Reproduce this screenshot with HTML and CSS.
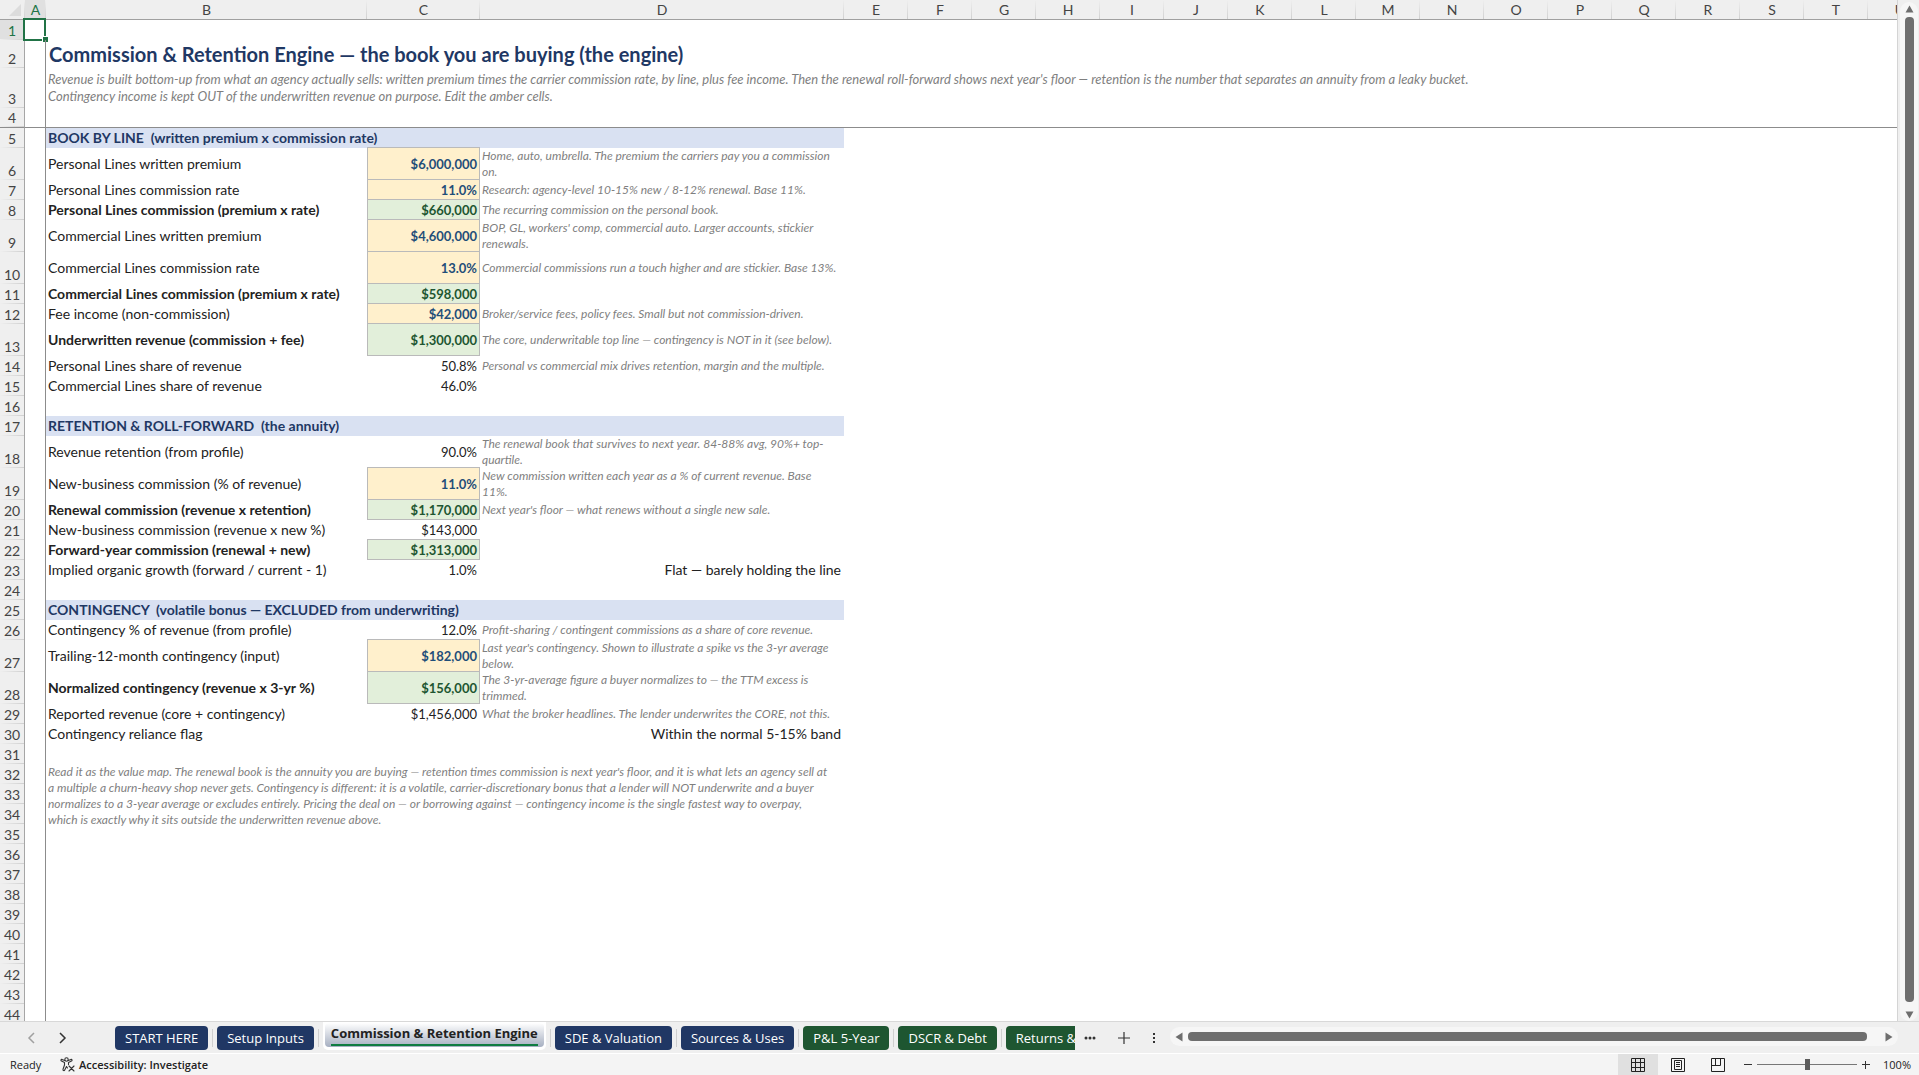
FILE: index.html
```html
<!DOCTYPE html>
<html lang="en">
<head>
<meta charset="utf-8">
<title>Commission &amp; Retention Engine</title>
<link rel="stylesheet" href="styles.css">
</head>
<body>
<main class="workspace">
  <div class="sheet">
    <table class="grid">
      <colgroup>
        <col class="w-head"><col class="w-a"><col class="w-b"><col class="w-c"><col class="w-d">
        <col span="17" class="w-std">
      </colgroup>
      <thead>
        <tr><th class="corner"><svg width="12" height="12" viewBox="0 0 12 12"><path d="M12 0v12H0z" fill="#dcdcdc"/></svg></th><th class="active">A</th><th>B</th><th>C</th><th>D</th><th>E</th><th>F</th><th>G</th><th>H</th><th>I</th><th>J</th><th>K</th><th>L</th><th>M</th><th>N</th><th>O</th><th>P</th><th>Q</th><th>R</th><th>S</th><th>T</th><th>U</th></tr>
      </thead>
      <tbody>
        <tr><th class="active">1</th><td class="a selected"></td></tr>
        <tr class="title-row"><th>2</th><td class="a"></td><td class="title" colspan="14">Commission &amp; Retention Engine — the book you are buying (the engine)</td></tr>
        <tr class="intro-row"><th>3</th><td class="a"></td><td class="intro" colspan="14">Revenue is built bottom-up from what an agency actually sells: written premium times the carrier commission rate, by line, plus fee income. Then the renewal roll-forward shows next year's floor — retention is the number that separates an annuity from a leaky bucket.<br>Contingency income is kept OUT of the underwritten revenue on purpose. Edit the amber cells.</td></tr>
        <tr class="frozen"><th>4</th><td class="a"></td><td colspan="20"></td></tr>
        <tr><th>5</th><td class="a"></td><td class="band" colspan="3">BOOK BY LINE&nbsp; (written premium x commission rate)</td></tr>
        <tr class="tall"><th>6</th><td class="a"></td><td>Personal Lines written premium</td><td class="num input">$6,000,000</td><td class="note">Home, auto, umbrella. The premium the carriers pay you a commission on.</td></tr>
        <tr><th>7</th><td class="a"></td><td>Personal Lines commission rate</td><td class="num input">11.0%</td><td class="note">Research: agency-level 10-15% new / 8-12% renewal. Base 11%.</td></tr>
        <tr><th>8</th><td class="a"></td><td class="strong">Personal Lines commission (premium x rate)</td><td class="num result">$660,000</td><td class="note">The recurring commission on the personal book.</td></tr>
        <tr class="tall"><th>9</th><td class="a"></td><td>Commercial Lines written premium</td><td class="num input">$4,600,000</td><td class="note">BOP, GL, workers' comp, commercial auto. Larger accounts, stickier renewals.</td></tr>
        <tr class="tall"><th>10</th><td class="a"></td><td>Commercial Lines commission rate</td><td class="num input">13.0%</td><td class="note">Commercial commissions run a touch higher and are stickier. Base 13%.</td></tr>
        <tr><th>11</th><td class="a"></td><td class="strong">Commercial Lines commission (premium x rate)</td><td class="num result">$598,000</td></tr>
        <tr><th>12</th><td class="a"></td><td>Fee income (non-commission)</td><td class="num input">$42,000</td><td class="note">Broker/service fees, policy fees. Small but not commission-driven.</td></tr>
        <tr class="tall"><th>13</th><td class="a"></td><td class="strong">Underwritten revenue (commission + fee)</td><td class="num result">$1,300,000</td><td class="note">The core, underwritable top line — contingency is NOT in it (see below).</td></tr>
        <tr><th>14</th><td class="a"></td><td>Personal Lines share of revenue</td><td class="num">50.8%</td><td class="note">Personal vs commercial mix drives retention, margin and the multiple.</td></tr>
        <tr><th>15</th><td class="a"></td><td>Commercial Lines share of revenue</td><td class="num">46.0%</td></tr>
        <tr><th>16</th><td class="a"></td></tr>
        <tr><th>17</th><td class="a"></td><td class="band" colspan="3">RETENTION &amp; ROLL-FORWARD&nbsp; (the annuity)</td></tr>
        <tr class="tall"><th>18</th><td class="a"></td><td>Revenue retention (from profile)</td><td class="num">90.0%</td><td class="note">The renewal book that survives to next year. 84-88% avg, 90%+ top-quartile.</td></tr>
        <tr class="tall"><th>19</th><td class="a"></td><td>New-business commission (% of revenue)</td><td class="num input">11.0%</td><td class="note">New commission written each year as a % of current revenue. Base 11%.</td></tr>
        <tr><th>20</th><td class="a"></td><td class="strong">Renewal commission (revenue x retention)</td><td class="num result">$1,170,000</td><td class="note">Next year's floor — what renews without a single new sale.</td></tr>
        <tr><th>21</th><td class="a"></td><td>New-business commission (revenue x new %)</td><td class="num">$143,000</td></tr>
        <tr><th>22</th><td class="a"></td><td class="strong">Forward-year commission (renewal + new)</td><td class="num result">$1,313,000</td></tr>
        <tr><th>23</th><td class="a"></td><td>Implied organic growth (forward / current - 1)</td><td class="num">1.0%</td><td class="flag">Flat — barely holding the line</td></tr>
        <tr><th>24</th><td class="a"></td></tr>
        <tr><th>25</th><td class="a"></td><td class="band" colspan="3">CONTINGENCY&nbsp; (volatile bonus — EXCLUDED from underwriting)</td></tr>
        <tr><th>26</th><td class="a"></td><td>Contingency % of revenue (from profile)</td><td class="num">12.0%</td><td class="note">Profit-sharing / contingent commissions as a share of core revenue.</td></tr>
        <tr class="tall"><th>27</th><td class="a"></td><td>Trailing-12-month contingency (input)</td><td class="num input">$182,000</td><td class="note">Last year's contingency. Shown to illustrate a spike vs the 3-yr average below.</td></tr>
        <tr class="tall"><th>28</th><td class="a"></td><td class="strong">Normalized contingency (revenue x 3-yr %)</td><td class="num result">$156,000</td><td class="note">The 3-yr-average figure a buyer normalizes to — the TTM excess is trimmed.</td></tr>
        <tr><th>29</th><td class="a"></td><td>Reported revenue (core + contingency)</td><td class="num">$1,456,000</td><td class="note">What the broker headlines. The lender underwrites the CORE, not this.</td></tr>
        <tr><th>30</th><td class="a"></td><td>Contingency reliance flag</td><td></td><td class="flag">Within the normal 5-15% band</td></tr>
        <tr><th>31</th><td class="a"></td></tr>
        <tr><th>32</th><td class="a"></td><td class="note closing" colspan="3" rowspan="4">Read it as the value map. The renewal book is the annuity you are buying — retention times commission is next year's floor, and it is what lets an agency sell at a multiple a churn-heavy shop never gets. Contingency is different: it is a volatile, carrier-discretionary bonus that a lender will NOT underwrite and a buyer normalizes to a 3-year average or excludes entirely. Pricing the deal on — or borrowing against — contingency income is the single fastest way to overpay, which is exactly why it sits outside the underwritten revenue above.</td></tr>
        <tr><th>33</th><td class="a"></td></tr>
        <tr><th>34</th><td class="a"></td></tr>
        <tr><th>35</th><td class="a"></td></tr>
        <tr><th>36</th><td class="a"></td></tr>
        <tr><th>37</th><td class="a"></td></tr>
        <tr><th>38</th><td class="a"></td></tr>
        <tr><th>39</th><td class="a"></td></tr>
        <tr><th>40</th><td class="a"></td></tr>
        <tr><th>41</th><td class="a"></td></tr>
        <tr><th>42</th><td class="a"></td></tr>
        <tr><th>43</th><td class="a"></td></tr>
        <tr><th>44</th><td class="a"></td></tr>
      </tbody>
    </table>
  </div>
  <div class="vscroll">
    <svg width="9" height="8" viewBox="0 0 9 8"><path d="M4.500 0.500L8.500 7.500H0.500z" fill="#6e6e6e"/></svg>
    <div class="vthumb"></div>
    <svg width="9" height="8" viewBox="0 0 9 8"><path d="M4.500 7.500L8.500 0.500H0.500z" fill="#6e6e6e"/></svg>
  </div>
</main>

<div class="tabbar">
  <nav class="sheets" aria-label="Sheets">
    <div class="arrows">
      <button type="button" aria-label="Previous sheet"><svg width="8" height="12" viewBox="0 0 8 12" fill="none" stroke="#a0a0a0" stroke-width="1.500"><path d="M7 1L2 6l5 5"/></svg></button>
      <button type="button" aria-label="Next sheet"><svg width="8" height="12" viewBox="0 0 8 12" fill="none" stroke="#333" stroke-width="1.500"><path d="M1 1l5 5-5 5"/></svg></button>
    </div>
    <div class="tabs">
      <button type="button" class="tab blue">START HERE</button>
      <span class="sep"></span>
      <button type="button" class="tab blue">Setup Inputs</button>
      <span class="sep"></span>
      <div class="current"><button type="button" class="tab"><span>Commission &amp; Retention Engine</span></button></div>
      <span class="sep"></span>
      <button type="button" class="tab blue">SDE &amp; Valuation</button>
      <span class="sep"></span>
      <button type="button" class="tab blue">Sources &amp; Uses</button>
      <span class="sep"></span>
      <button type="button" class="tab green">P&amp;L 5-Year</button>
      <span class="sep"></span>
      <button type="button" class="tab green">DSCR &amp; Debt</button>
      <span class="sep"></span>
      <button type="button" class="tab green">Returns &amp;</button>
    </div>
  </nav>
  <div class="tools">
    <button type="button" aria-label="More sheets"><svg width="12" height="4" viewBox="0 0 12 4" fill="#333"><circle cx="2" cy="2" r="1.500"/><circle cx="6" cy="2" r="1.500"/><circle cx="10" cy="2" r="1.500"/></svg></button>
    <button type="button" aria-label="New sheet"><svg width="12" height="12" viewBox="0 0 12 12" stroke="#333"><path d="M6 0v12M0 6h12" stroke-width="1.200"/></svg></button>
    <button type="button" aria-label="Resize tabs"><svg width="4" height="12" viewBox="0 0 4 12" fill="#333"><path d="M1 1h2v2H1zM1 5h2v2H1zM1 9h2v2H1z"/></svg></button>
  </div>
  <div class="hscroll">
    <svg width="8" height="10" viewBox="0 0 8 10"><path d="M7.500 0.500v9L0.500 5z" fill="#6e6e6e"/></svg>
    <div class="hthumb"></div>
    <svg width="8" height="10" viewBox="0 0 8 10"><path d="M0.500 0.500v9L7.500 5z" fill="#6e6e6e"/></svg>
  </div>
</div>

<footer class="status">
  <span class="ready">Ready</span>
  <button type="button" class="access">
    <svg width="15" height="15" viewBox="0 0 15 15" fill="none" stroke="#333" stroke-width="1.100" stroke-linejoin="round" stroke-linecap="round"><circle cx="6.500" cy="2.500" r="1.700"/><path d="M4.800 3.400L2 2.400C0.800 2.200 0.600 3.700 1.500 4.100L4.500 5.400V8L3 12.300c-0.300 1.300 1.200 1.700 1.700 0.700L6.500 9.500l1 1.500M8.200 3.400L11 2.400c1.200-0.200 1.400 1.300 0.500 1.700L8.500 5.400V7.500"/><path d="M9 9l5 5M14 9l-5 5"/></svg>
    Accessibility: Investigate
  </button>
  <div class="views">
    <button type="button" class="view on" aria-label="Normal view"><svg width="14" height="14" viewBox="0 0 14 14" fill="none" stroke="#222"><path d="M.5.5h13v13H.5zM.5 4.500h13M.5 9.500h13M4.500.5v13M9.500.5v13"/></svg></button>
    <button type="button" class="view" aria-label="Page layout"><svg width="14" height="14" viewBox="0 0 14 14" fill="none" stroke="#222"><path d="M.5.5h13v13H.5zM3.500 2.500h7v9h-7zM5 4.500h4M5 6.500h4M5 8.500h4"/></svg></button>
    <button type="button" class="view" aria-label="Page break preview"><svg width="14" height="14" viewBox="0 0 14 14" fill="none" stroke="#222"><path d="M.5.5h13v13H.5zM4.500.5v7M9.500.5v7M.5 7.500h9"/></svg></button>
  </div>
  <div class="zoom">
    <button type="button" aria-label="Zoom out"><svg width="8" height="8" viewBox="0 0 8 8" stroke="#333"><path d="M0 3.500h8"/></svg></button>
    <input type="range" min="0" max="100" value="50" aria-label="Zoom">
    <button type="button" aria-label="Zoom in"><svg width="8" height="8" viewBox="0 0 8 8" stroke="#333"><path d="M0 3.500h8M3.500 0v8"/></svg></button>
    <span class="percent">100%</span>
  </div>
</footer>
</body>
</html>
```
FILE: styles.css
```css
* { box-sizing: border-box; }

body {
  margin: 0;
  height: 100vh;
  display: flex;
  flex-direction: column;
  overflow: hidden;
  background: #efefef;
  color: #222;
  font: 14px/18px Lato, Carlito, sans-serif;
}

button {
  margin: 0;
  padding: 0;
  border: 0;
  background: none;
  color: inherit;
  font: inherit;
}

svg { display: block; }

/* Worksheet */
.workspace { flex: 1; min-height: 0; display: flex; }

.sheet {
  flex: 1;
  min-width: 0;
  overflow: hidden;
  background: #fff;
  border-right: 1px solid #d4d4d4;
}

.grid { table-layout: fixed; width: 1932px; border-spacing: 0; }
.w-head { width: 25px; }
.w-a { width: 21px; }
.w-b { width: 321px; }
.w-c { width: 113px; }
.w-d { width: 364px; }
.w-std { width: 64px; }

.grid tr { height: 20px; }
.grid .title-row { height: 28px; }
.grid .intro-row { height: 40px; }
.grid .tall { height: 32px; }

th, td { padding: 0 3px 0 2px; text-align: left; vertical-align: middle; white-space: nowrap; }

th {
  padding: 0;
  background: #efefef;
  color: #444;
  font-size: 14px;
  font-weight: 400;
  text-align: center;
}

thead th {
  height: 20px;
  border-bottom: 1px solid #a0a0a0;
  background: linear-gradient(#efefef, #d0d0d0) right / 1px 100% no-repeat #efefef;
}

tbody th {
  vertical-align: bottom;
  border-right: 1px solid #a6a6a6;
  background: linear-gradient(90deg, #efefef, #d0d0d0) bottom / 100% 1px no-repeat #efefef;
}

thead .corner svg { margin: 0 0 0 9px; }
th.active { background-color: #e0e0e0; color: #217346; }

.a { position: relative; border-right: 1px solid #8c8c8c; }
.frozen td, .frozen th { border-bottom: 1px solid #8c8c8c; }

.selected::before {
  content: "";
  position: absolute;
  inset: -2px -1px -1px -2px;
  border: 2px solid #217346;
}

.selected::after {
  content: "";
  position: absolute;
  right: -3px;
  bottom: -2px;
  width: 5px;
  height: 5px;
  background: #217346;
  border: 1px solid #fff;
  border-width: 1px 0 0 1px;
}

.title { color: #1f3864; font-size: 20px; line-height: 24px; font-weight: 700; padding-left: 3px; }
.intro { color: #7f7f7f; font-size: 13px; line-height: 17px; font-style: italic; }
.band { background: #d9e1f2; color: #1f3864; font-weight: 700; }
.strong { font-weight: 700; }
.num { text-align: right; font-size: 13px; }
.flag { text-align: right; }

.input, .result {
  border: solid #bababa;
  border-width: 0 1px 1px;
  box-shadow: 0 -1px #bababa;
  padding-right: 2px;
  font-weight: 700;
}
.input { background: #fff0cc; color: #1f4e79; }
.result { background: #e2efda; color: #1e5631; }

.note {
  padding-right: 6px;
  color: #7f7f7f;
  font-size: 12px;
  line-height: 16px;
  font-style: italic;
  white-space: normal;
}
.closing { padding-right: 12px; vertical-align: top; }

.vscroll {
  flex: 0 0 18px;
  margin: 2px 1px 0 2px;
  padding: 3px 4px 2px;
  border-radius: 9px;
  background: #f6f6f6;
  display: flex;
  flex-direction: column;
  align-items: center;
  gap: 4px;
}
.vthumb { flex: 1; width: 9px; margin-bottom: 5px; border-radius: 4px; background: #6e6e6e; }

/* Sheet tabs */
.tabbar {
  flex: 0 0 33px;
  display: flex;
  align-items: stretch;
  border-top: 1px solid #d8d8d8;
  border-bottom: 1px solid #fff;
  font: 13px/18px "Open Sans", "Segoe UI", sans-serif;
}

.sheets { flex: 0 0 56%; min-width: 0; display: flex; }
.arrows { flex: 0 0 115px; display: flex; align-items: center; gap: 24px; padding-left: 27px; }
.tabs { flex: 1; min-width: 0; display: flex; align-items: center; overflow: hidden; }

.tab {
  flex: none;
  height: 24px;
  padding: 0 10px;
  border-radius: 4px;
  color: #fff;
  white-space: nowrap;
}
.blue { background: #203764; }
.green { background: #1e5631; }

.sep { flex: 0 0 1px; height: 18px; margin: 0 4px; background: #cfcfcf; }

.current {
  flex: none;
  align-self: flex-start;
  margin-top: -1px;
  height: 29px;
  padding: 2px;
  background: #fff;
  border-radius: 0 0 5px 5px;
}
.current .tab {
  padding: 0 6px;
  background: linear-gradient(#fff, #a6afc1);
  color: #222;
  font-weight: 700;
}
.current span { display: block; height: 22px; border-bottom: 2px solid #107c41; }

.tools { flex: 0 0 95px; display: flex; align-items: center; justify-content: space-between; padding: 0 14px 0 9px; }

.hscroll {
  flex: 1;
  min-width: 0;
  margin: 5px 21px 7px 0;
  padding: 0 5px;
  border-radius: 10px;
  background: #f6f6f6;
  display: flex;
  align-items: center;
  gap: 5px;
}
.hthumb { flex: 1; height: 9px; margin-right: 13px; border-radius: 4px; background: #6e6e6e; }

/* Status bar */
.status {
  flex: 0 0 21px;
  display: flex;
  align-items: center;
  background: #f4f4f4;
  padding: 0 8px 0 10px;
  font: 11px/18px "Open Sans", "Segoe UI", sans-serif;
}
.ready { flex: 0 0 50px; }
.access { display: flex; align-items: center; gap: 4px; font-weight: 600; }
.views { display: flex; align-self: stretch; margin-left: auto; }
.view { width: 40px; display: flex; align-items: center; justify-content: center; }
.view.on { background: #e0e0e0; }

.zoom { display: flex; align-items: center; gap: 5px; margin-left: 6px; }
.percent { width: 28px; margin-left: 8px; text-align: right; }

.zoom input {
  appearance: none;
  width: 100px;
  height: 12px;
  margin: 0;
  background: linear-gradient(#777, #777) center / 100% 1px no-repeat;
}
.zoom input::-webkit-slider-thumb {
  appearance: none;
  width: 5px;
  height: 11px;
  background: #5c5c5c;
}
```
